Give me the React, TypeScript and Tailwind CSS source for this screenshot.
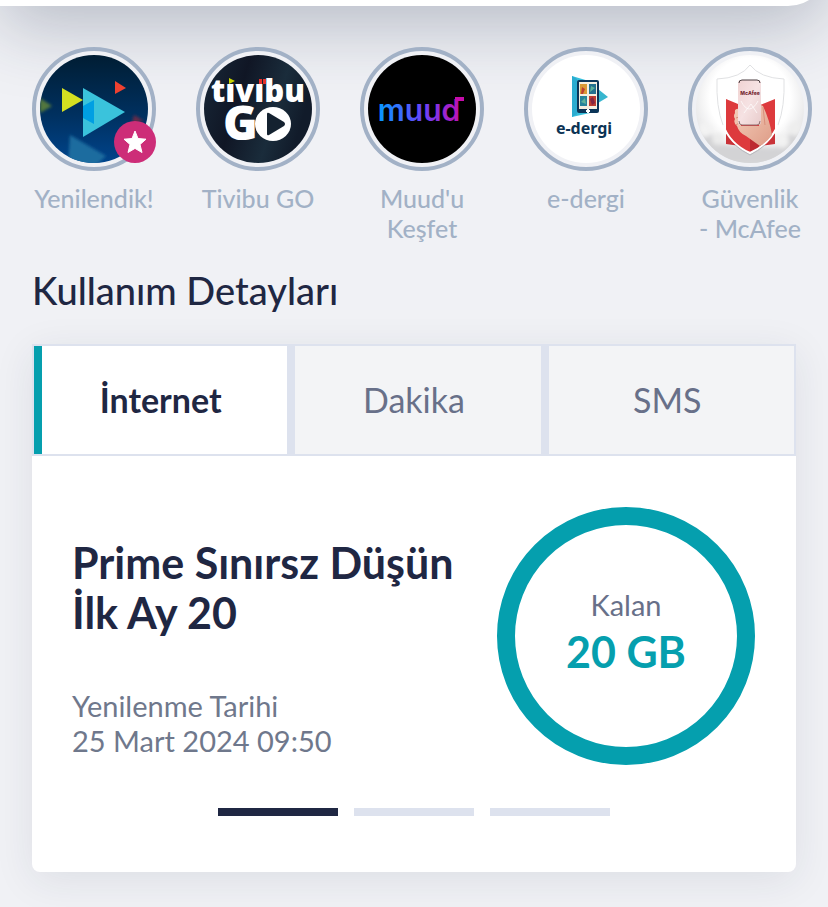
import { useState, type ReactNode } from "react";

function YenilendikLogo() {
  return (
    <svg viewBox="0 0 108 108" className="size-full" aria-hidden="true">
      <defs>
        <linearGradient id="navy" x1="0" y1="0" x2="0" y2="1">
          <stop offset="0" stopColor="#001d33" />
          <stop offset="0.55" stopColor="#00305f" />
          <stop offset="1" stopColor="#00448c" />
        </linearGradient>
        <filter id="soft" x="-20%" y="-20%" width="140%" height="140%">
          <feGaussianBlur stdDeviation="1.5" />
        </filter>
      </defs>
      <rect width="108" height="108" fill="url(#navy)" />
      <g filter="url(#soft)">
        <path d="M0 43L12 51L0 58Z" fill="#53773e" />
        <path d="M30 80L66 101L54 112H28Z" fill="#1c6c9f" />
        <path d="M94 60L104 66L92 68Z" fill="#6b2946" />
      </g>
      <path d="M22 33L43 45L22 57Z" fill="#d5e021" />
      <path d="M43 33L85 57L43 82Z" fill="#3ac3dc" />
      <path d="M43 51L54 45V69L43 63Z" fill="#009fe3" />
      <path d="M75 26L86 33L75 39Z" fill="#ef4130" />
    </svg>
  );
}

function TivibuLogo() {
  return (
    <svg viewBox="0 0 108 108" className="size-full" aria-hidden="true">
      <defs>
        <linearGradient id="night" x1="0" y1="0" x2="1" y2="0.3">
          <stop offset="0" stopColor="#182838" />
          <stop offset="0.4" stopColor="#101625" />
          <stop offset="0.75" stopColor="#1a2c3b" />
          <stop offset="1" stopColor="#111b2a" />
        </linearGradient>
      </defs>
      <rect width="108" height="108" fill="url(#night)" />
      <text fontFamily="Open Sans, sans-serif" fontWeight="800" fontSize="31" fill="#fff">
        <tspan x="7" y="47">tıvıbu</tspan>
        <tspan x="19" y="85" fontSize="47">G</tspan>
      </text>
      <path d="M25 23L31 26L25 29Z" fill="#c8d400" />
      <path d="M55 24H58V29H55ZM59 24H62V29H59Z" fill="#e4322c" />
      <ellipse cx="69" cy="69" rx="18" ry="17" fill="#fff" />
      <path d="M63 59Q63 57 65 58L80 67Q82 69 80 71L65 80Q63 81 63 79Z" fill="#142230" />
    </svg>
  );
}

function MuudLogo() {
  return (
    <svg viewBox="0 0 108 108" className="size-full" aria-hidden="true">
      <defs>
        <linearGradient id="muud" gradientUnits="userSpaceOnUse" x1="12" y1="0" x2="96" y2="0">
          <stop offset="0" stopColor="#0a95ff" />
          <stop offset="0.5" stopColor="#6844fa" />
          <stop offset="1" stopColor="#c60dab" />
        </linearGradient>
      </defs>
      <rect width="108" height="108" fill="#000" />
      <text x="51" y="66" textAnchor="middle" fontFamily="Inter" fontWeight="600" fontSize="30" fill="url(#muud)">
        muud
      </text>
      <path d="M87 42H96V46H87Z" fill="#c60dab" />
    </svg>
  );
}

function DergiLogo() {
  return (
    <svg viewBox="0 0 108 108" className="size-full" aria-hidden="true">
      <rect width="108" height="108" fill="#fff" />
      <path d="M40 21L67 29V56L40 62Z" fill="#36bfdc" />
      <path d="M40 21L45 24V59L40 62Z" fill="#2bacd0" />
      <path d="M66 34L76 42L66 48Z" fill="#37b6cf" />
      <rect x="45" y="25" width="22" height="33" rx="2" fill="#0b3558" />
      <rect x="47" y="27" width="18" height="27" fill="#f5efe0" />
      <path d="M48 29H55V39H48Z" fill="#d99a35" />
      <path d="M57 29H64V39H57Z" fill="#23718f" />
      <path d="M48 41H55V51H48Z" fill="#268399" />
      <path d="M57 41H64V51H57Z" fill="#bd3e32" />
      <path d="M50 32L53 34L51 39H49Z" fill="#bd3e32" />
      <path d="M59 31L63 33L58 37ZM49 47L53 43L54 49Z" fill="#5eb29a" />
      <path d="M58 44L61 42L63 48L60 50Z" fill="#842742" />
      <path d="M55 54H57V55H58V57H57V58H55V57H54V55H55Z" fill="#fff" />
      <text x="52" y="79" textAnchor="middle" fontFamily="Noto Sans, sans-serif" fontWeight="700" fontSize="16" fill="#0c3354">
        e-dergi
      </text>
    </svg>
  );
}

function McAfeeLogo() {
  return (
    <svg viewBox="0 0 108 108" className="size-full" aria-hidden="true">
      <defs>
        <radialGradient id="glow" cx="0.5" cy="0.4" r="0.62">
          <stop offset="0.6" stopColor="#fff" />
          <stop offset="0.85" stopColor="#e9e9ea" />
          <stop offset="1" stopColor="#d2d3d5" />
        </radialGradient>
        <linearGradient id="phone" x1="0" y1="0" x2="1" y2="1">
          <stop offset="0" stopColor="#f0d3d3" />
          <stop offset="0.5" stopColor="#f6e2e3" />
          <stop offset="1" stopColor="#e8cccc" />
        </linearGradient>
        <linearGradient id="skin" x1="0" y1="0" x2="1" y2="1">
          <stop offset="0" stopColor="#f5cfbb" />
          <stop offset="1" stopColor="#de9c87" />
        </linearGradient>
        <filter id="cloud" x="-50%" y="-50%" width="200%" height="200%">
          <feGaussianBlur stdDeviation="2" />
        </filter>
        <clipPath id="shield">
          <path d="M54 10Q45 23 21 24Q20 52 27 70Q34 89 54 99Q74 89 82 70Q89 52 88 24Q64 23 54 10Z" />
        </clipPath>
      </defs>
      <rect width="108" height="108" fill="url(#glow)" />
      <g filter="url(#cloud)">
        <path d="M0 74Q18 78 26 90L80 93Q90 78 108 74V108H0Z" fill="#d3d3d5" />
        <circle cx="9" cy="75" r="7" fill="#f3f3f3" />
        <circle cx="22" cy="84" r="6" fill="#ececec" />
        <circle cx="86" cy="86" r="7" fill="#f2f2f2" />
        <circle cx="99" cy="74" r="7" fill="#eee" />
      </g>
      <path d="M30 78V89L48 91.5ZM79 78V89L61 91.5Z" fill="#c93238" />
      <g clipPath="url(#shield)">
        <rect width="108" height="108" fill="#fff" />
        <path d="M30 44L54 54L79 44V99H30Z" fill="#dd3a3d" />
        <path d="M54 75L79 78V99H54Z" fill="#bd2a30" />
      </g>
      <path d="M54 10Q45 23 21 24Q20 52 27 70Q34 89 54 99Q74 89 82 70Q89 52 88 24Q64 23 54 10Z" fill="none" stroke="#e0e1e3" strokeWidth="1" />
      <path d="M27 70Q34 89 54 98Q74 89 82 70" fill="none" stroke="#fff" strokeWidth="2" />
      <path d="M39 90Q46 96 54 100Q62 96 69 90" fill="none" stroke="#b6b8bc" strokeWidth="1" />
      <path d="M44 54Q38 53 39 58Q37 61 39 64Q37 68 41 71Q43 78 50 81L64 91Q71 87 76 80Q74 66 67 51L63 49V71H45Z" fill="url(#skin)" />
      <path d="M40 63L43 62M40 70L43 68M67 52L69 70" stroke="#d88f7b" strokeWidth="1" fill="none" />
      <rect x="42" y="25" width="23" height="45" rx="3" fill="url(#phone)" />
      <path d="M43 28Q43 25 46 25H61Q64 25 64 28" fill="none" stroke="#4a3d40" strokeWidth="1" />
      <path d="M43 66Q43 70 46 70H61Q64 70 64 66" fill="none" stroke="#8c6d6d" strokeWidth="1" />
      <path d="M45 46Q53 62 62 46M48 58L55 49L61 58" fill="none" stroke="#fff" strokeWidth="1" opacity="0.7" />
      <text x="54" y="40" textAnchor="middle" fontFamily="Inter, sans-serif" fontWeight="800" fontSize="5" fill="#772b35">
        McAfee
      </text>
    </svg>
  );
}

const stories: { label: string; logo: ReactNode; starred?: boolean }[] = [
  { label: "Yenilendik!", logo: <YenilendikLogo />, starred: true },
  { label: "Tivibu GO", logo: <TivibuLogo /> },
  { label: "Muud'u\nKeşfet", logo: <MuudLogo /> },
  { label: "e-dergi", logo: <DergiLogo /> },
  { label: "Güvenlik\n- McAfee", logo: <McAfeeLogo /> },
];

const tabs = ["İnternet", "Dakika", "SMS"];

export default function App() {
  const [tab, setTab] = useState(0);
  const [slide, setSlide] = useState(0);

  return (
    <div className="min-h-screen overflow-hidden bg-[#f0f1f5] pb-8 font-['Lato','Noto_Sans',sans-serif] text-[#1f2743]">
      <header className="-mt-[154px] h-40 rounded-br-[40px] bg-white shadow-[0_20px_70px_rgba(31,45,75,0.27)]" />

      <nav className="relative mt-[41px] flex gap-10 px-8" aria-label="Hikayeler">
        {stories.map((story) => (
          <button key={story.label} type="button" className="flex w-[124px] shrink-0 flex-col items-center">
            <span className="relative size-[124px] rounded-full border-4 border-[#a2b1c6] bg-[#f0f1f5] p-1">
              <span className="block size-full overflow-hidden rounded-full">{story.logo}</span>
              {story.starred && (
                <span className="absolute -right-1 bottom-1 flex size-[42px] items-center justify-center rounded-full bg-[#cd2d78]">
                  <svg viewBox="0 0 24 24" className="size-6" fill="#fff" stroke="#fff" strokeWidth="1" strokeLinejoin="round" aria-hidden="true">
                    <path d="M12 1L15 8.5L23 9.2L17 14.5L19 22.5L12 18.4L5 22.5L7 14.5L1 9.2L9 8.5Z" />
                  </svg>
                </span>
              )}
            </span>
            <span className="mt-3 text-center text-[25px] leading-[30px] font-medium whitespace-pre-line text-[#a2b1c6]">
              {story.label}
            </span>
          </button>
        ))}
      </nav>

      <main className="mt-6 px-8">
        <h1 className="text-[38px] leading-[46px] font-medium">Kullanım Detayları</h1>

        <section className="mt-[31px] rounded-b-lg bg-white shadow-[0_8px_40px_rgba(31,39,67,0.09)]">
          <div role="tablist" className="grid h-28 grid-cols-3 border-2 border-[#dde2ee]">
            {tabs.map((name, i) => (
              <button
                key={name}
                type="button"
                role="tab"
                aria-selected={tab === i}
                onClick={() => setTab(i)}
                className={
                  tab === i
                    ? "bg-white pb-0.5 text-[34px] font-bold shadow-[inset_8px_0_0_#059fae]"
                    : "bg-[#f3f4f6] pb-0.5 text-[34px] text-[#687089] shadow-[inset_8px_0_0_#dde2ee]"
                }
              >
                {name}
              </button>
            ))}
          </div>

          <div className="flex items-center justify-between pt-[51px] pr-[41px] pl-10">
            <div className="pt-6">
              <h2 className="text-[43px] leading-[50px] font-bold">
                Prime Sınırsz Düşün
                <br />
                İlk Ay 20
              </h2>
              <p className="mt-[50px] text-[29px] leading-[35px] text-[#6f788c]">
                Yenilenme Tarihi
                <br />
                25 Mart 2024 09:50
              </p>
            </div>
            <div className="flex size-[258px] shrink-0 flex-col items-center justify-center rounded-full border-[18px] border-[#059fae] pb-2">
              <span className="text-[29px] leading-[40px] text-[#687089]">Kalan</span>
              <span className="text-[43px] leading-[54px] font-bold text-[#059fae]">20 GB</span>
            </div>
          </div>

          <div className="mt-[43px] flex justify-center gap-4 pb-14">
            {[0, 1, 2].map((i) => (
              <button
                key={i}
                type="button"
                aria-label={`Paket ${i + 1}`}
                onClick={() => setSlide(i)}
                className={slide === i ? "h-2 w-[120px] bg-[#1f2743]" : "h-2 w-[120px] bg-[#dde2ee]"}
              />
            ))}
          </div>
        </section>
      </main>
    </div>
  );
}
